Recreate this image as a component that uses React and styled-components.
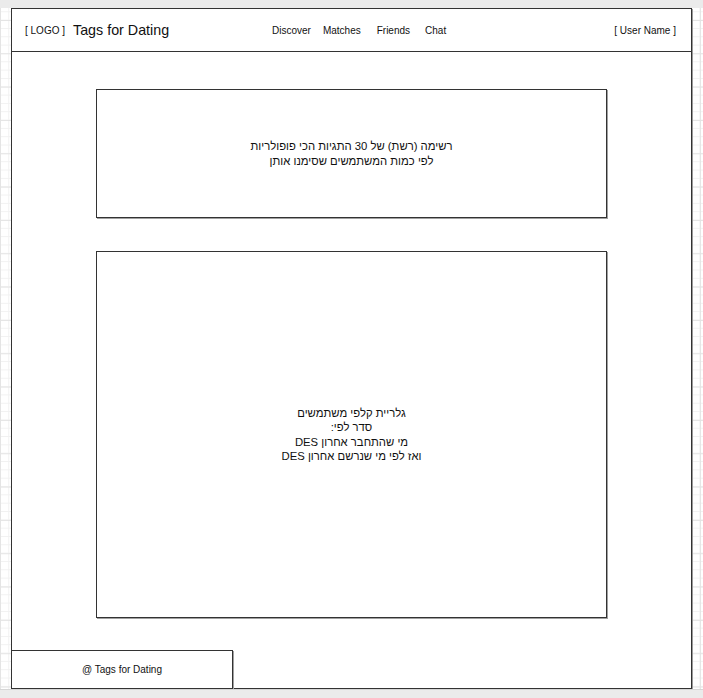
import React from 'react'
import styled, { createGlobalStyle } from 'styled-components'

const GlobalStyle = createGlobalStyle`
    html, body {
        margin: 0;
        padding: 0;
    }
    body {
        font-family: "Liberation Sans", "DejaVu Sans", Arial, sans-serif;
        color: #111;
    }
`;

// draw.io mock spacing between the nav labels is uneven
const navItems = [
    { label: 'Discover', space: 0 },
    { label: 'Matches', space: 12 },
    { label: 'Friends', space: 16 },
    { label: 'Chat', space: 15 },
];

function App() {
    return (
        <Page>
            <GlobalStyle />
            <Strip />
            <Canvas>
                <Frame>
                    <Header>
                        <Brand>
                            <Logo>[ LOGO ]</Logo>
                            <Title>Tags for Dating</Title>
                        </Brand>
                        <Nav>
                            {navItems.map((item) => (
                                <NavLink key={item.label} space={item.space}>{item.label}</NavLink>
                            ))}
                        </Nav>
                        <UserName>[ User Name ]</UserName>
                    </Header>
                    <Main>
                        <Panel height={129} dir="rtl">
                            <div>רשימה (רשת) של 30 התגיות הכי פופולריות</div>
                            <div>לפי כמות המשתמשים שסימנו אותן</div>
                        </Panel>
                        <Panel height={367} dir="rtl">
                            <div>גלריית קלפי משתמשים</div>
                            <div>סדר לפי:</div>
                            <div>מי שהתחבר אחרון DES</div>
                            <div>ואז לפי מי שנרשם אחרון DES</div>
                        </Panel>
                    </Main>
                    <Footer>@ Tags for Dating</Footer>
                </Frame>
            </Canvas>
            <Strip />
        </Page>
    )
}

export default App

const Page = styled.div`
    width: 703px;
    height: 698px;
    display: flex;
    flex-direction: column;
    overflow: hidden;
    background-color: #ffffff;
    background-image:
        linear-gradient(to right, #e4e4e4 1px, transparent 1px),
        linear-gradient(to bottom, #e4e4e4 1px, transparent 1px),
        linear-gradient(to right, #f1f1f1 1px, transparent 1px),
        linear-gradient(to bottom, #f1f1f1 1px, transparent 1px);
    background-size: 33.33px 33.33px, 33.33px 33.33px, 8.333px 8.333px, 8.333px 8.333px;
    background-position: 0 20px, 0 20px, 0 3px, 0 3px;
`;

const Strip = styled.div`
    height: 8px;
    flex: none;
    background: #ebebeb;

    &:last-child {
        height: 9px;
        border-top: 1px solid #d6d6d6;
    }
`;

const Canvas = styled.div`
    flex: 1;
    padding: 0 11px;
    display: flex;
    flex-direction: column;
`;

const Frame = styled.div`
    height: 681px;
    box-sizing: border-box;
    border: 1px solid #333;
    box-shadow: 1px 1px 0 #9a9a9a;
    background: #fff;
    display: flex;
    flex-direction: column;
`;

const Header = styled.div`
    height: 43px;
    box-sizing: border-box;
    border-bottom: 1px solid #333;
    display: flex;
    flex-direction: row;
    align-items: center;
    padding: 0 15px 0 13px;
`;

const Brand = styled.div`
    display: flex;
    flex-direction: row;
    align-items: center;
    width: 247px;
`;

const Logo = styled.span`
    font-size: 10px;
    margin-right: 8px;
`;

const Title = styled.span`
    font-size: 14.3px;
`;

const Nav = styled.div`
    display: flex;
    flex-direction: row;
    flex: 1;
`;

const NavLink = styled.span`
    font-size: 10px;
    margin-left: ${(p) => p.space}px;
    cursor: pointer;
`;

const UserName = styled.span`
    font-size: 10px;
`;

const Main = styled.div`
    flex: 1;
    display: flex;
    flex-direction: column;
    align-items: center;
    gap: 33px;
    padding-top: 37px;
`;

const Panel = styled.div`
    width: 511px;
    height: ${(p) => p.height}px;
    box-sizing: border-box;
    border: 1px solid #333;
    box-shadow: 1px 1px 0 #a0a0a0;
    display: flex;
    flex-direction: column;
    justify-content: center;
    align-items: center;
    text-align: center;
    font-size: 11.3px;
    line-height: 14.5px;
`;

const Footer = styled.div`
    width: 222px;
    height: 39px;
    box-sizing: border-box;
    margin: 0 0 -1px -1px;
    border: 1px solid #333;
    box-shadow: 1px 1px 0 #a0a0a0;
    background: #fff;
    display: flex;
    align-items: center;
    justify-content: center;
    font-size: 10px;
`;
